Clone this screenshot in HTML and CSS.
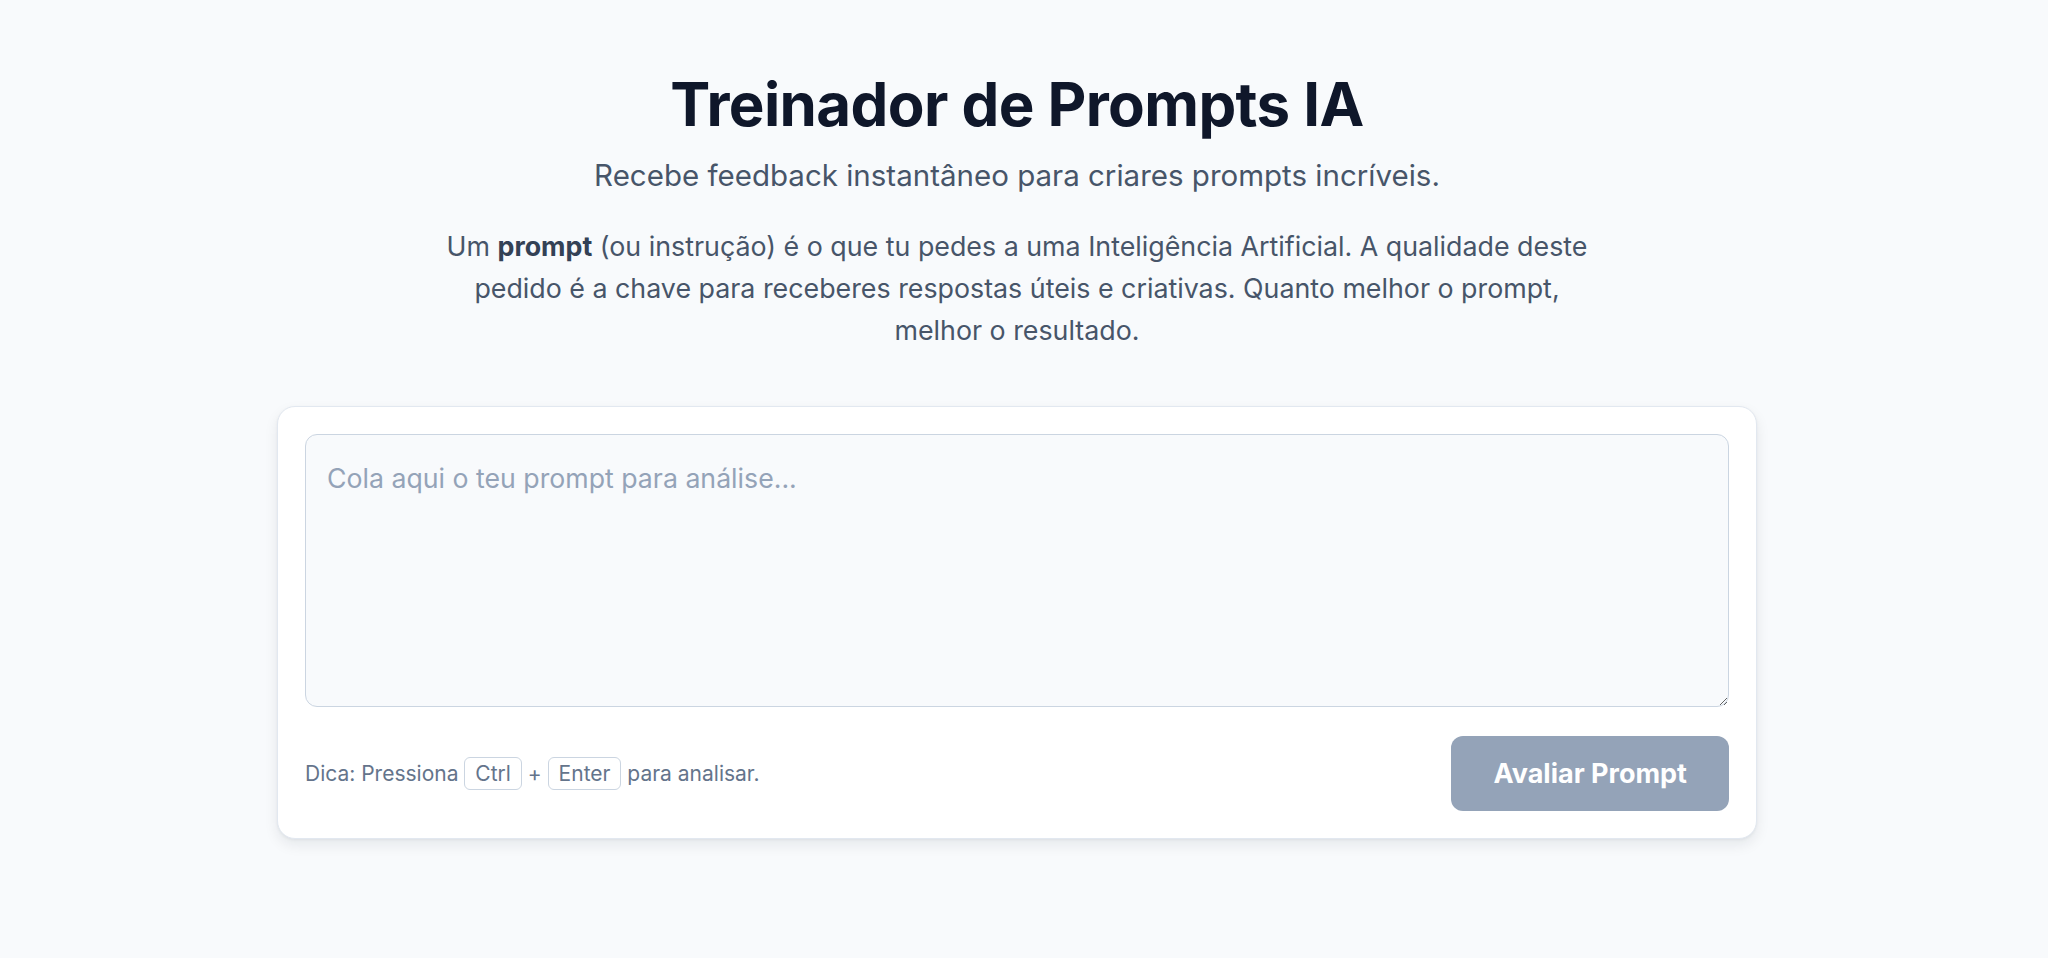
FILE: index.html
```html
<!DOCTYPE html>
<html lang="pt">
<head>
<meta charset="utf-8">
<title>Treinador de Prompts IA</title>
<link rel="stylesheet" href="styles.css">
</head>
<body>
<main class="page">
  <header class="intro">
    <h1 class="title">Treinador de Prompts IA</h1>
    <p class="subtitle">Recebe feedback instantâneo para criares prompts incríveis.</p>
    <p class="lead">Um <strong>prompt</strong> (ou instrução) é o que tu pedes a uma Inteligência Artificial. A qualidade deste pedido é a chave para receberes respostas úteis e criativas. Quanto melhor o prompt, melhor o resultado.</p>
  </header>
  <section class="card">
    <textarea class="prompt-input" placeholder="Cola aqui o teu prompt para análise..."></textarea>
    <div class="card-footer">
      <p class="hint">Dica: Pressiona <kbd class="key">Ctrl</kbd> + <kbd class="key">Enter</kbd> para analisar.</p>
      <button class="submit" type="button" disabled>Avaliar Prompt</button>
    </div>
  </section>
</main>
</body>
</html>
```
FILE: styles.css
```css
* { box-sizing: border-box; }

html, body {
  margin: 0;
  padding: 0;
  background: #f8fafc;
}

body {
  font-family: Inter, "Noto Sans", "Liberation Sans", sans-serif;
  color: #475569;
  padding-right: 14px;
  min-height: 958px;
}

.page {
  max-width: 1480px;
  margin: 0 auto;
  padding-top: 74px;
}

.intro {
  display: flex;
  flex-direction: column;
  align-items: center;
  text-align: center;
}

.title {
  margin: 0;
  font-size: 60px;
  line-height: 60px;
  font-weight: 700;
  letter-spacing: -0.6px;
  color: #0f172a;
}

.subtitle {
  margin: 23px 0 0;
  font-size: 29.5px;
  line-height: 36px;
  color: #475569;
}

.lead {
  margin: 32px 0 0;
  max-width: 1166px;
  font-size: 26.8px;
  line-height: 42px;
  color: #475569;
}

.lead strong {
  font-weight: 700;
  color: #334155;
}

.card {
  margin-top: 55px;
  background: #ffffff;
  border: 1px solid #e2e8f0;
  border-radius: 18px;
  padding: 27px;
  box-shadow: 0 6px 14px rgba(15, 23, 42, 0.08), 0 1px 3px rgba(15, 23, 42, 0.05);
}

.prompt-input {
  display: block;
  width: 100%;
  height: 273px;
  margin: 0;
  padding: 22px 21px;
  border: 1px solid #cbd5e1;
  border-radius: 12px;
  background: #f8fafc;
  font-family: inherit;
  font-size: 26.7px;
  line-height: 42px;
  color: #0f172a;
  resize: vertical;
  outline: none;
}

.prompt-input::placeholder {
  color: #94a3b8;
}

.card-footer {
  margin-top: 29px;
  display: flex;
  align-items: center;
  justify-content: space-between;
}

.hint {
  margin: 0;
  font-size: 21px;
  line-height: 33px;
  color: #64748b;
}

.key {
  display: inline-block;
  font-family: inherit;
  font-size: 21px;
  line-height: 31px;
  padding: 0 10px;
  border: 1px solid #cbd5e1;
  border-radius: 6px;
  background: #ffffff;
  color: #64748b;
}

.submit {
  height: 75px;
  padding: 0 42px;
  border: none;
  border-radius: 12px;
  background: #94a3b8;
  color: #ffffff;
  font-family: inherit;
  font-size: 27px;
  font-weight: 700;
  cursor: not-allowed;
}
```
